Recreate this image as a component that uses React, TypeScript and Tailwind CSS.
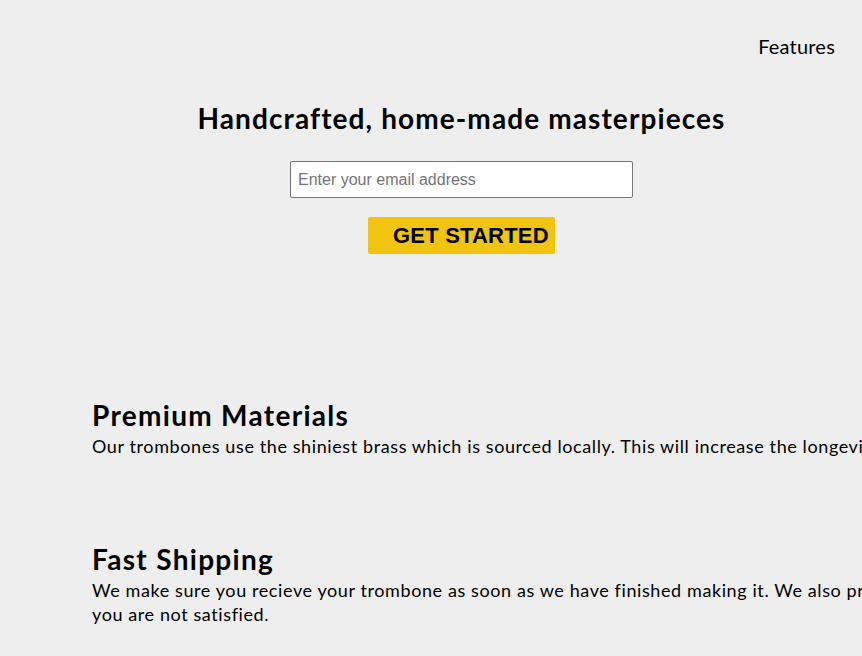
import React from "react";

type Feature = {
  title: string;
  text: string;
};

const features: Feature[] = [
  {
    title: "Premium Materials",
    text: "Our trombones use the shiniest brass which is sourced locally. This will increase the longevity of your purchase.",
  },
  {
    title: "Fast Shipping",
    text: "We make sure you recieve your trombone as soon as we have finished making it. We also provide free returns if you are not satisfied.",
  },
];

export default function App() {
  return (
    <div className="h-[656px] w-full overflow-hidden bg-[#eeeeee] text-black font-['Lato','Noto_Sans',sans-serif]">
      <div className="w-[923px]">
        <header className="flex justify-end pr-[88px] pt-[34px]">
          <nav>
            <a className="text-[20px] leading-[24px] tracking-[0.2px]">Features</a>
          </nav>
        </header>

        <section className="mt-[41px] flex flex-col items-center">
          <h1 className="text-[28px] font-bold leading-[34px] tracking-[1.1px]">
            Handcrafted, home-made masterpieces
          </h1>
          <input
            type="email"
            placeholder="Enter your email address"
            className="mt-[26px] h-[37px] w-[343px] rounded-[2px] border border-[#767676] bg-white px-[7px] font-['Liberation_Sans',Arial,sans-serif] text-[16px] placeholder:text-[#757575]"
          />
          <button className="mt-[19px] h-[37px] w-[187px] rounded-[2px] bg-[#f1c40f] pl-[25px] text-left font-['Liberation_Sans',Arial,sans-serif] text-[22px] font-bold leading-[37px] tracking-[0.2px]">
            GET STARTED
          </button>
        </section>

        <section className="mt-[143px] flex flex-col gap-[83px]">
          {features.map((f) => (
            <div key={f.title} className="flex">
              <div className="w-[87px] shrink-0" />
              <div className="w-[978px] shrink-0 px-[5px]">
                <h2 className="text-[28px] font-bold leading-[36px] tracking-[1.3px]">{f.title}</h2>
                <p className="mt-[1px] text-[18px] leading-[24px] tracking-[0.6px]">{f.text}</p>
              </div>
            </div>
          ))}
        </section>
      </div>
    </div>
  );
}
